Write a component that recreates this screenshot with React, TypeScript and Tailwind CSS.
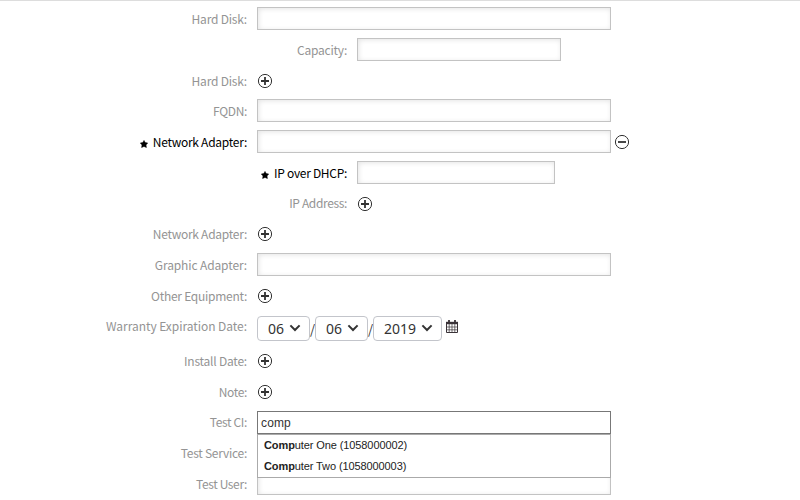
import React from 'react';

const labelFont = "font-['Noto_Sans_CJK_SC','Noto_Sans',sans-serif]";
const inputBox = 'h-[23px] shrink-0 border border-[#c3c3c3] bg-white shadow-[inset_1px_1px_5px_#e4e4e4]';

function CircleIcon({ minus = false, className = '' }: { minus?: boolean; className?: string }) {
  return (
    <svg viewBox="0 0 16 16" className={`h-4 w-4 shrink-0 ${className}`} fill="none" stroke="#333">
      <circle cx="8" cy="8" r="6.6" strokeWidth="1" />
      <path d={minus ? 'M4 8h8' : 'M4 8h8M8 4v8'} strokeWidth="1.8" />
    </svg>
  );
}

type RowProps = {
  label: string;
  tracking: string;
  height?: string;
  nested?: boolean;
  required?: boolean;
  align?: string;
  raise?: string;
  children?: React.ReactNode;
};

function Row({
  label,
  tracking,
  height = 'h-[31px]',
  nested = false,
  required = false,
  align = 'pt-1',
  raise = '',
  children,
}: RowProps) {
  return (
    <div className={`flex ${height} ${align}`}>
      <label
        className={`mr-[10px] flex h-[23px] shrink-0 items-center justify-end text-[12px] leading-[23px] whitespace-nowrap ${labelFont} ${tracking} ${raise} ${
          nested ? 'w-[347px]' : 'w-[247px]'
        } ${required ? 'text-black' : 'text-[#949494]'}`}
      >
        {required && (
          <svg viewBox="0 0 8 8" className="mt-[4px] mr-[5px] h-2 w-2 shrink-0" fill="#000" stroke="#000" strokeWidth=".5">
            <path d="M4 .4 5.2 2.6 7.7 3 6 4.9 6.4 7.5 4 6.4 1.6 7.5 2 4.9.3 3 2.8 2.6z" />
          </svg>
        )}
        {label}
      </label>
      {children}
    </div>
  );
}

function DateSelect({ value, width }: { value: string; width: string }) {
  return (
    <div
      className={`flex h-[25px] ${width} shrink-0 items-center justify-between rounded-[4px] border border-[#c3c5cb] bg-white pr-[8px] pl-[10px] font-['Noto_Sans',sans-serif] text-[14px] text-[#333]`}
    >
      <span>{value}</span>
      <svg viewBox="0 0 12 8" className="mb-px h-2 w-3" fill="none" stroke="#333" strokeWidth="2">
        <path d="M1.4 1.4 6 6l4.6-4.6" />
      </svg>
    </div>
  );
}

function Slash() {
  return (
    <span className="w-[5px] shrink-0 pt-[3px] text-center font-['Noto_Sans_CJK_SC','Noto_Sans',sans-serif] text-[13px] leading-[20px] text-[#333]">
      /
    </span>
  );
}

function Calendar() {
  return (
    <svg viewBox="0 0 13 14" className="mt-[4px] ml-[4px] h-[14px] w-[13px] shrink-0" fill="none" stroke="#3a3338">
      <path d="M.5 3v9.5h11V3" strokeWidth="1" />
      <path d="M0 3h12" strokeWidth="2.4" />
      <path d="M3 0v3.5M9 0v3.5" strokeWidth="1.8" />
      <path d="M3.2 4v8.5M6 4v8.5M8.8 4v8.5M.5 7h11M.5 9.8h11" strokeWidth=".7" />
    </svg>
  );
}

const matches = ['uter One (1058000002)', 'uter Two (1058000003)'];

export default function App() {
  return (
    <div className="h-[500px] w-[800px] overflow-hidden border-t border-[#ddd] bg-white pt-[2px]">
      <Row label="Hard Disk:" tracking="tracking-[-0.2px]"><div className={`w-[354px] ${inputBox}`} /></Row>
      <Row label="Capacity:" tracking="tracking-[-0.22px]" nested><div className={`w-[204px] ${inputBox}`} /></Row>
      <Row label="Hard Disk:" tracking="tracking-[-0.2px]" height="h-[30px]"><CircleIcon className="mt-1" /></Row>
      <Row label="FQDN:" tracking="tracking-[-0.35px]"><div className={`w-[354px] ${inputBox}`} /></Row>
      <Row label="Network Adapter:" tracking="tracking-[-0.27px]" required>
        <div className={`w-[354px] ${inputBox}`} />
        <CircleIcon minus className="mt-1 ml-[3px]" />
      </Row>
      <Row label="IP over DHCP:" tracking="tracking-[-0.3px]" nested required>
        <div className={`w-[198px] ${inputBox}`} />
      </Row>
      <Row label="IP Address:" tracking="tracking-[-0.35px]" raise="-mt-px" nested><CircleIcon className="mt-1" /></Row>
      <Row label="Network Adapter:" tracking="tracking-[-0.27px]" raise="-mt-px" height="h-[30px]">
        <CircleIcon className="mt-[3px]" />
      </Row>
      <Row label="Graphic Adapter:" tracking="tracking-[-0.13px]"><div className={`w-[354px] ${inputBox}`} /></Row>
      <Row label="Other Equipment:" tracking="tracking-[-0.27px]"><CircleIcon className="mt-1" /></Row>
      <Row label="Warranty Expiration Date:" tracking="tracking-[-0.05px]" raise="-mt-[2px]" height="h-[35px]" align="pt-[5px]">
        <DateSelect value="06" width="w-[53px]" />
        <Slash />
        <DateSelect value="06" width="w-[53px]" />
        <Slash />
        <DateSelect value="2019" width="w-[69px]" />
        <Calendar />
      </Row>
      <Row label="Install Date:" tracking="tracking-[-0.22px]" raise="-mt-px"><CircleIcon className="mt-[3px]" /></Row>
      <Row label="Note:" tracking="tracking-[-0.35px]" raise="-mt-px" height="h-[30px]"><CircleIcon className="mt-[3px]" /></Row>
      <Row label="Test CI:" tracking="tracking-[-0.35px]" raise="-mt-px">
        <div className="relative h-[23px] w-[354px] shrink-0 border border-[#777] bg-white pl-[3px] font-['Liberation_Sans',sans-serif] text-[12px] leading-[22px] tracking-[0.15px] text-[#333]">
          comp
          <ul className="absolute top-[22px] -left-px z-10 h-[44px] w-[354px] border border-[#aaa] bg-white text-[11px] tracking-[-0.1px] text-[#222]">
            {matches.map((rest) => (
              <li key={rest} className="h-[21px] pl-[6px] leading-[21px]">
                <b>Comp</b>{rest}
              </li>
            ))}
          </ul>
        </div>
      </Row>
      <Row label="Test Service:" tracking="tracking-[-0.27px]" raise="-mt-px" height="h-[30px]">
        <div className={`w-[354px] ${inputBox}`} />
      </Row>
      <Row label="Test User:" tracking="tracking-[-0.37px]"><div className={`w-[354px] ${inputBox}`} /></Row>
    </div>
  );
}
